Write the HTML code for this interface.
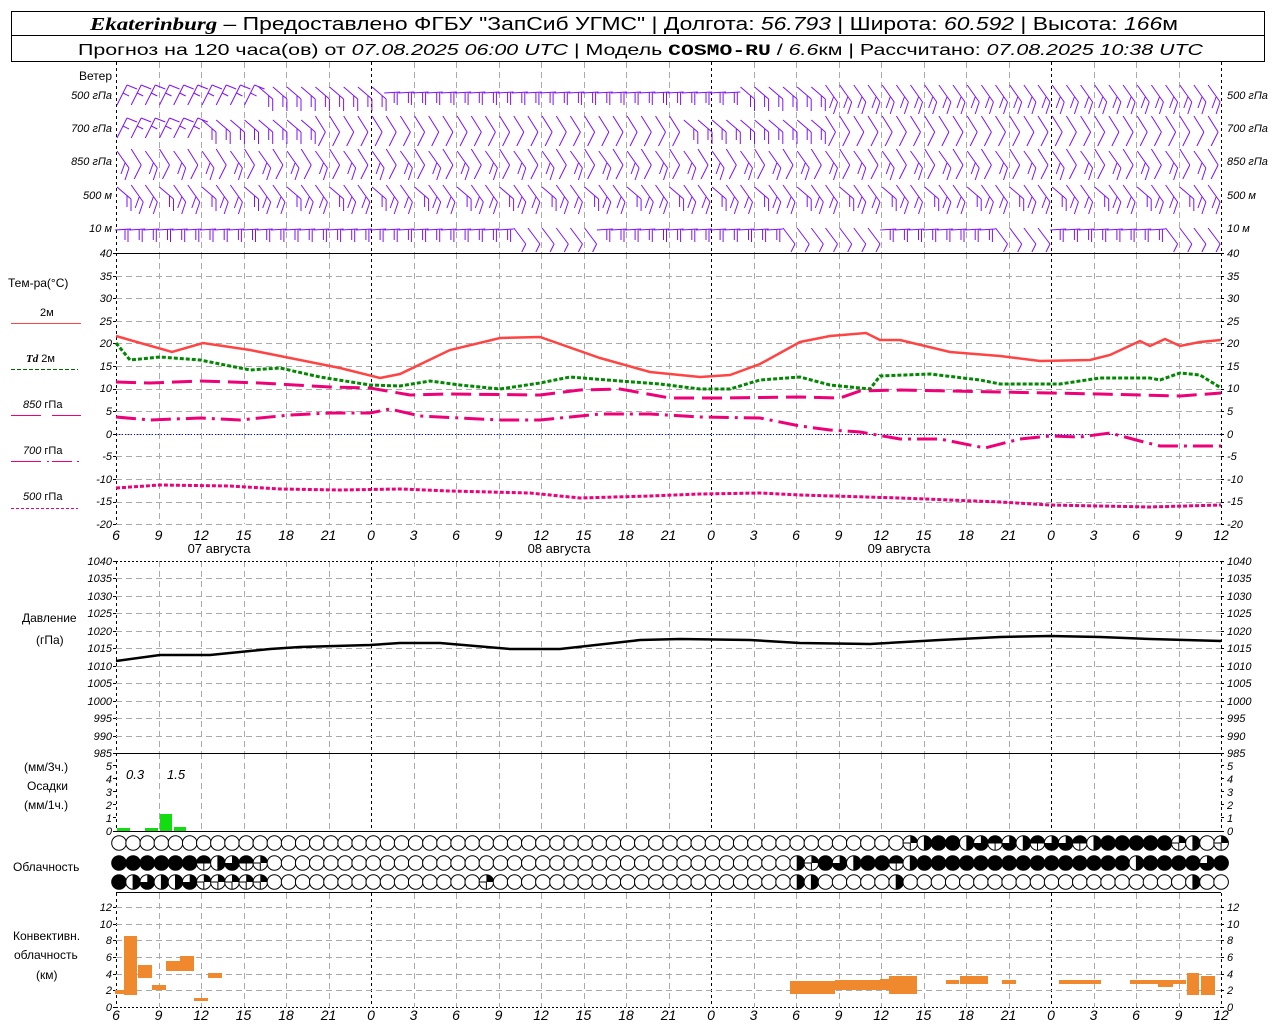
<!DOCTYPE html>
<html><head><meta charset="utf-8"><style>
html,body{margin:0;padding:0;background:#fff;width:1280px;height:1024px;overflow:hidden}
svg{display:block}
text{font-family:"Liberation Sans","DejaVu Sans",sans-serif;fill:#000}
.t{font-size:11px;font-style:italic}
.xl{font-size:14px;font-style:italic}
.lb{font-size:12px}
</style></head><body>
<svg id="s" width="1280" height="1024" viewBox="0 0 1280 1024" xmlns="http://www.w3.org/2000/svg">
<rect x="11.5" y="11.5" width="1253" height="50" fill="none" stroke="#000"/>
<line x1="11" y1="35.5" x2="1264" y2="35.5" stroke="#000"/>
<text x="90" y="30" font-size="18" textLength="1088" lengthAdjust="spacingAndGlyphs"><tspan font-family="Liberation Serif" font-style="italic" font-weight="bold">Ekaterinburg</tspan> – Предоставлено ФГБУ "ЗапСиб УГМС" | Долгота: <tspan font-style="italic">56.793</tspan> | Широта: <tspan font-style="italic">60.592</tspan> | Высота: <tspan font-style="italic">166</tspan>м</text>
<text x="78" y="55" font-size="16" textLength="1125" lengthAdjust="spacingAndGlyphs">Прогноз на 120 часа(ов) от <tspan font-style="italic">07.08.2025 06:00 UTC</tspan>  | Модель <tspan font-family="Liberation Mono" font-weight="bold">COSMO-RU</tspan> / <tspan font-style="italic">6.6</tspan>км | Рассчитано: <tspan font-style="italic">07.08.2025 10:38 UTC</tspan></text>
<g id="g"></g>
<g class="lb">
<text x="112" y="80" text-anchor="end">Ветер</text>
<g class="t"><text x="112" y="99" text-anchor="end">500 гПа</text><text x="112" y="132" text-anchor="end">700 гПа</text><text x="112" y="165" text-anchor="end">850 гПа</text><text x="112" y="199" text-anchor="end">500 м</text><text x="112" y="232" text-anchor="end">10   м</text>
<text x="1227" y="99">500 гПа</text><text x="1227" y="132">700 гПа</text><text x="1227" y="165">850 гПа</text><text x="1227" y="199">500 м</text><text x="1227" y="232">10   м</text></g>
<text x="8" y="287">Тем-ра(°C)</text>
<text x="40" y="316" font-size="11">2м</text>
<text x="26" y="362" font-size="11"><tspan font-style="italic" font-weight="bold" font-family="Liberation Serif">Td</tspan>  2м</text>
<text x="23" y="408" font-size="11"><tspan font-style="italic">850</tspan> гПа</text>
<text x="23" y="454" font-size="11"><tspan font-style="italic">700</tspan> гПа</text>
<text x="23" y="500" font-size="11"><tspan font-style="italic">500</tspan> гПа</text>
<text x="22" y="622">Давление</text><text x="36" y="644">(гПа)</text>
<text x="24" y="771">(мм/3ч.)</text><text x="27" y="790">Осадки</text><text x="24" y="809">(мм/1ч.)</text>
<text x="13" y="871">Облачность</text>
<text x="13" y="940">Конвективн.</text><text x="14" y="959">облачность</text><text x="36" y="979">(км)</text>
<text x="126" y="779" font-size="13" font-style="italic">0.3</text><text x="167" y="779" font-size="13" font-style="italic">1.5</text>
<text x="219" y="553" text-anchor="middle" font-size="13">07 августа</text>
<text x="559" y="553" text-anchor="middle" font-size="13">08 августа</text>
<text x="899" y="553" text-anchor="middle" font-size="13">09 августа</text>
</g>
<g class="t">
<g text-anchor="end"><text x="112" y="257">40</text><text x="112" y="280">35</text><text x="112" y="302">30</text><text x="112" y="325">25</text><text x="112" y="347">20</text><text x="112" y="370">15</text><text x="112" y="392">10</text><text x="112" y="415">5</text><text x="112" y="438">0</text><text x="112" y="460">-5</text><text x="112" y="483">-10</text><text x="112" y="505">-15</text><text x="112" y="528">-20</text></g>
<text x="1227" y="257">40</text><text x="1227" y="280">35</text><text x="1227" y="302">30</text><text x="1227" y="325">25</text><text x="1227" y="347">20</text><text x="1227" y="370">15</text><text x="1227" y="392">10</text><text x="1227" y="415">5</text><text x="1227" y="438">0</text><text x="1227" y="460">-5</text><text x="1227" y="483">-10</text><text x="1227" y="505">-15</text><text x="1227" y="528">-20</text>
<g text-anchor="end"><text x="112" y="565">1040</text><text x="112" y="582">1035</text><text x="112" y="600">1030</text><text x="112" y="617">1025</text><text x="112" y="635">1020</text><text x="112" y="652">1015</text><text x="112" y="670">1010</text><text x="112" y="687">1005</text><text x="112" y="705">1000</text><text x="112" y="722">995</text><text x="112" y="740">990</text><text x="112" y="757">985</text></g>
<text x="1227" y="565">1040</text><text x="1227" y="582">1035</text><text x="1227" y="600">1030</text><text x="1227" y="617">1025</text><text x="1227" y="635">1020</text><text x="1227" y="652">1015</text><text x="1227" y="670">1010</text><text x="1227" y="687">1005</text><text x="1227" y="705">1000</text><text x="1227" y="722">995</text><text x="1227" y="740">990</text><text x="1227" y="757">985</text>
<g text-anchor="end"><text x="112" y="770">5</text><text x="112" y="783">4</text><text x="112" y="796">3</text><text x="112" y="809">2</text><text x="112" y="822">1</text><text x="112" y="835">0</text></g>
<text x="1227" y="770">5</text><text x="1227" y="783">4</text><text x="1227" y="796">3</text><text x="1227" y="809">2</text><text x="1227" y="822">1</text><text x="1227" y="835">0</text>
<g text-anchor="end"><text x="112" y="911">12</text><text x="112" y="928">10</text><text x="112" y="944">8</text><text x="112" y="961">6</text><text x="112" y="978">4</text><text x="112" y="994">2</text><text x="112" y="1011">0</text></g>
<text x="1227" y="911">12</text><text x="1227" y="928">10</text><text x="1227" y="944">8</text><text x="1227" y="961">6</text><text x="1227" y="978">4</text><text x="1227" y="994">2</text><text x="1227" y="1011">0</text>
</g>
<g class="xl" text-anchor="middle">
<text x="116" y="540">6</text><text x="158.5" y="540">9</text><text x="201" y="540">12</text><text x="243.5" y="540">15</text><text x="286" y="540">18</text><text x="328.5" y="540">21</text><text x="371" y="540">0</text><text x="413.5" y="540">3</text><text x="456" y="540">6</text><text x="498.5" y="540">9</text><text x="541" y="540">12</text><text x="583.5" y="540">15</text><text x="626" y="540">18</text><text x="668.5" y="540">21</text><text x="711" y="540">0</text><text x="753.5" y="540">3</text><text x="796" y="540">6</text><text x="838.5" y="540">9</text><text x="881" y="540">12</text><text x="923.5" y="540">15</text><text x="966" y="540">18</text><text x="1008.5" y="540">21</text><text x="1051" y="540">0</text><text x="1093.5" y="540">3</text><text x="1136" y="540">6</text><text x="1178.5" y="540">9</text><text x="1221" y="540">12</text>
<text x="116" y="1020">6</text><text x="158.5" y="1020">9</text><text x="201" y="1020">12</text><text x="243.5" y="1020">15</text><text x="286" y="1020">18</text><text x="328.5" y="1020">21</text><text x="371" y="1020">0</text><text x="413.5" y="1020">3</text><text x="456" y="1020">6</text><text x="498.5" y="1020">9</text><text x="541" y="1020">12</text><text x="583.5" y="1020">15</text><text x="626" y="1020">18</text><text x="668.5" y="1020">21</text><text x="711" y="1020">0</text><text x="753.5" y="1020">3</text><text x="796" y="1020">6</text><text x="838.5" y="1020">9</text><text x="881" y="1020">12</text><text x="923.5" y="1020">15</text><text x="966" y="1020">18</text><text x="1008.5" y="1020">21</text><text x="1051" y="1020">0</text><text x="1093.5" y="1020">3</text><text x="1136" y="1020">6</text><text x="1178.5" y="1020">9</text><text x="1221" y="1020">12</text>
</g>
</svg>
<script>
(function(){
var g=document.getElementById('g'),h='';
function L(x1,y1,x2,y2,c,w,d){h+='<line x1="'+x1+'" y1="'+y1+'" x2="'+x2+'" y2="'+y2+'" stroke="'+c+'" stroke-width="'+(w||1)+'"'+(d?' stroke-dasharray="'+d+'"':'')+'/>';}
function P(pts,c,w,d){h+='<polyline fill="none" points="'+pts.map(function(p){return p.join(',')}).join(' ')+'" stroke="'+c+'" stroke-width="'+w+'"'+(d?' stroke-dasharray="'+d+'"':'')+'/>';}
var panels=[[62,253],[253,524],[561,753],[753,831],[893,1007]];
for(var k=0;k<=26;k++){var x=116+k*42.5;var blk=(k==0||k==6||k==14||k==22||k==26);
 if(k==14)x=711; if(k==22)x=1051; x=Math.round(x)+.5;
 panels.forEach(function(p){L(x,p[0],x,p[1],blk?'#000':'#aaa',1,blk?'3,3':'6,4');});}
for(var i=0;i<=12;i++){var y=Math.round(253+i*22.6)+.5; if(i>0)L(116,y,1221,y,'#aaa',1,'6,4');}
for(var i=1;i<11;i++){var y=Math.round(561+i*17.45)+.5;L(116,y,1221,y,'#aaa',1,'6,4');}
L(116,561.5,1221,561.5,'#000',1,'2,2');
for(var i=1;i<=6;i++){var y=Math.round(1007-i*16.67)+.5;L(116,y,1221,y,'#aaa',1,'6,4');}
L(116,1007.5,1221,1007.5,'#000',1,'2,2');
L(116,253.5,1221,253.5,'#000',1);L(116,753.5,1221,753.5,'#000',1);L(116,831.5,1221,831.5,'#000',1);
L(116,892.5,1221,892.5,'#000',1);L(116,434.5,1221,434.5,'#00f',1,'1,2');
[[253,524,22.6],[561,753,17.45],[765,831,13.1],[907,1007,16.67]].forEach(function(t){for(var y=t[0];y<=t[1]+1;y+=t[2]){var yy=Math.round(y)+.5;L(113,yy,116,yy,'#000');L(1221,yy,1224,yy,'#000');}});
L(11,323.5,81,323.5,'#f44',1);L(11,369.5,78,369.5,'#060',1,'4,2');
L(11,415.5,41,415.5,'#e07',1);L(52,415.5,81,415.5,'#e07',1);
L(11,461.5,41,461.5,'#e07',1);L(47,461.5,49,461.5,'#e07',1);L(52,461.5,72,461.5,'#e07',1);L(77,461.5,79,461.5,'#e07',1);
L(11,508.5,78,508.5,'#e07',1,'3,2');
P([[116,336],[172,352],[203,343],[250,350],[290,358],[340,368],[380,378],[400,374],[450,350],[500,338],[540,337],[600,358],[650,372],[700,377],[730,375],[760,364],[800,342],[830,336],[866,333],[880,340],[900,340],[950,352],[1000,356],[1040,361],[1090,360],[1110,355],[1140,341],[1150,346],[1165,339],[1180,346],[1200,342],[1221,340]],'#f44',2.5);
P([[116,343],[130,360],[160,357],[200,360],[250,370],[280,368],[320,377],[370,385],[400,386],[430,381],[460,385],[500,389],[540,383],[570,377],[620,381],[660,384],[700,389],[730,389],[760,380],[800,377],[830,385],[870,389],[880,376],[930,374],[980,380],[1000,384],[1060,384],[1100,378],[1150,378],[1160,380],[1180,373],[1200,375],[1221,388]],'#080',3,'4,2');
P([[116,382],[150,383],[200,381],[260,383],[330,387],[370,388],[410,395],[450,394],[540,395],[580,390],[620,389],[670,398],[720,398],[800,397],[840,398],[860,391],[900,390],[1000,392],[1100,394],[1180,396],[1221,393]],'#e07',3,'20,8');
P([[116,417],[150,420],[200,418],[240,420],[290,415],[330,413],[370,413],[390,409],[420,416],[500,420],[540,420],[600,414],[650,414],[700,417],[760,418],[800,426],[830,430],[860,432],[900,439],[940,439],[985,448],[1020,439],[1050,436],[1080,437],[1110,433],[1140,441],[1160,446],[1221,446]],'#e07',3,'20,6,3,6');
P([[116,488],[160,485],[230,486],[280,489],[340,490],[400,489],[450,491],[530,493],[580,498],[650,496],[700,494],[760,493],[800,495],[900,498],[1000,502],[1050,505],[1150,507],[1221,505]],'#e07',3,'4,2');
P([[116,661],[160,655],[210,655],[270,649],[300,647],[370,645],[400,643],[440,643],[510,649],[560,649],[640,640],[680,639],[750,640],[800,643],[870,644],[940,640],[1000,637],[1050,636],[1100,637],[1150,639],[1221,641]],'#000',2.5);
[[117,828,13,3],[145,828,13,3],[160,814,12,17],[174,827,12,4]].forEach(function(r){h+='<rect x="'+r[0]+'" y="'+r[1]+'" width="'+r[2]+'" height="'+r[3]+'" fill="#1d1"/>';});
[[115,990,9,4],[124,936,13,59],[138,965,14,13],[152,985,14,5],[166,961,14,10],[180,956,14,15],[194,998,14,3],[208,973,14,5],[790,981,45,13],[835,980,45,10],[880,979,9,11],[889,976,28,18],[946,980,13,4],[960,976,28,8],[1002,980,14,4],[1059,980,42,4],[1130,980,56,4],[1158,984,15,3],[1187,973,12,22],[1201,976,14,19]].forEach(function(r){h+='<rect x="'+r[0]+'" y="'+r[1]+'" width="'+r[2]+'" height="'+r[3]+'" fill="#f0882e"/>';});
function row(s){var a=[];for(var i=0;i<79;i++)a.push('o');for(var k in s)a[k]=s[k];return a;}
var r1=row({56:'c',57:'h',58:'f',59:'f',60:'h',61:'q',62:'e',63:'q',64:'h',65:'e',66:'q',67:'q',68:'e',69:'h',70:'f',71:'f',72:'f',73:'f',74:'f',75:'c',76:'h',78:'c'});
var m2={0:'f',1:'f',2:'f',3:'f',4:'f',5:'f',6:'e',7:'h',8:'q',9:'e',10:'c',48:'h',49:'c',50:'f',51:'q',52:'h',53:'f',54:'f',55:'e',56:'h'};for(var i=57;i<79;i++)m2[i]='f';m2[72]='h';m2[77]='q';
var r2=row(m2);
var r3=row({0:'f',1:'h',2:'q',3:'h',4:'h',5:'q',6:'c',7:'c',8:'c',9:'c',10:'c',26:'c',48:'h',49:'h',55:'h',76:'h'});
function circ(x,y,t){var r=7.3;
 if(t=='f'){h+='<circle cx="'+x+'" cy="'+y+'" r="'+(r+.5)+'" fill="#000"/>';return;}
 h+='<circle cx="'+x+'" cy="'+y+'" r="'+r+'" fill="#fff" stroke="#000"/>';
 if(t=='h'){h+='<path d="M'+x+' '+(y-r)+'A'+r+' '+r+' 0 0 1 '+x+' '+(y+r)+'Z" fill="#000"/>';L(x,y-r,x,y+r,'#000');}
 if(t=='e'){h+='<path d="M'+(x-r)+' '+y+'A'+r+' '+r+' 0 0 1 '+(x+r)+' '+y+'Z" fill="#000"/>';L(x-r,y,x+r,y,'#000');L(x,y,x,y+r,'#000');}
 if(t=='c'){h+='<path d="M'+x+' '+y+'L'+x+' '+(y-r)+'A'+r+' '+r+' 0 0 1 '+(x+r)+' '+y+'Z" fill="#000"/>';L(x,y,x,y+r,'#000');L(x-r,y,x,y,'#000');}
 if(t=='q'){h+='<path d="M'+x+' '+y+'L'+x+' '+(y-r)+'A'+r+' '+r+' 0 1 1 '+(x-r)+' '+y+'Z" fill="#000"/>';}
}
for(var i=0;i<79;i++){var x=+(119+i*14.13).toFixed(1);circ(x,843,r1[i]);circ(x,863,r2[i]);circ(x,882,r3[i]);}
var C='#7f10ff';
function seg(a){h+='<polyline fill="none" stroke="'+C+'" points="'+a.join(' ')+'"/>';}
function barb(x,y,t){
 if(t=='s'){seg([x,y+10,x+10,y-10]);seg([x+10,y-10,x+20,y-6]);seg([x+6,y-2,x+12,y+1]);}
 else if(t=='b'){seg([x,y-8,x+14,y+4]);seg([x+14,y+4,x+14,y+16]);seg([x+10,y+1,x+10,y+12]);}
 else if(t=='v'){seg([x,y-12,x+10,y+4]);seg([x+10,y+4,x+3,y+18]);}
 else if(t=='w'){seg([x,y-10,x+12,y+7]);seg([x+12,y+7,x+8,y+19]);seg([x+8,y+2,x+4,y+13]);}
 else if(t=='f'){seg([x-2,y-2,x+14,y-3]);seg([x+8,y-3,x+8,y+8]);seg([x+11,y-3,x+11,y+10]);}
 else if(t=='d'){seg([x,y-4,x+12,y+12]);seg([x+12,y+12,x+8,y+20]);}
}
for(var i=0;i<78;i++){var x=+(117+i*14.17).toFixed(1);
 barb(x,95,i<10?'s':(i<19?'b':(i<44?'f':(i<50?'b':'w'))));
 barb(x,128,i<6?'s':(i<14?'b':(i<40?'v':(i<50?'b':'v'))));
 barb(x,161,(i%2)?'v':'w');
 barb(x,195,(i%3==0)?'b':'w');
 barb(x,232,(i<28||(i>=34&&i<47)||(i>=54&&i<62)||(i>=66&&i<74))?'f':'d');
}
g.innerHTML=h;
})();
</script>
</body></html>
